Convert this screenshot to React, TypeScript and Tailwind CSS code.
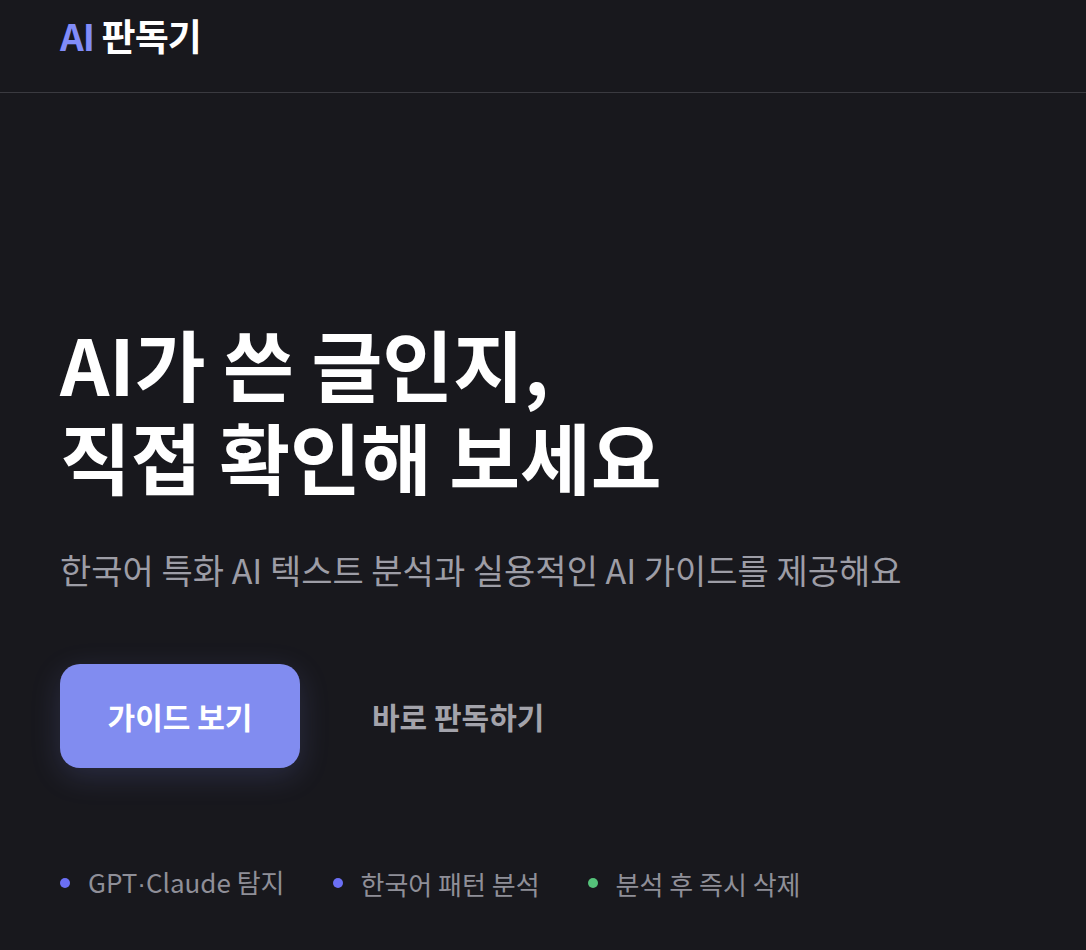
// 랜딩 히어로: 헤더 + 큰 제목 + CTA + 특징 뱃지

const font = { fontFamily: '"Noto Sans CJK KR", "Noto Sans", sans-serif' };

function Header() {
  return (
    <header className="h-[93px] border-b border-[#3a3a40]">
      <div className="h-full px-[60px] flex items-start pt-[11px]">
        <span className="text-[37px] font-bold tracking-tight leading-[48px]">
          <span className="text-[#818cf8]">AI</span>{" "}
          <span className="text-white">판독기</span>
        </span>
      </div>
    </header>
  );
}

const features = [
  { pre: "GPT", dot: true, rest: "Claude 탐지", color: "bg-[#6b6ff5]" },
  { pre: "한국어 패턴 분석", dot: false, rest: "", color: "bg-[#6b6ff5]" },
  { pre: "분석 후 즉시 삭제", dot: false, rest: "", color: "bg-[#55c27a]" },
];

export default function App() {
  return (
    <div className="min-h-[950px] bg-[#18181d]" style={font}>
      <Header />
      <main className="px-[60px] pt-[223px]">
        <h1 className="text-[77px] font-bold text-white leading-[93px]">
          AI가 쓴 글인지,
          <br />
          직접 확인해 보세요
        </h1>
        <p className="mt-[44px] text-[34px] text-[#9d9da6] leading-[48px]">
          한국어 특화 AI 텍스트 분석과 실용적인 AI 가이드를 제공해요
        </p>
        <div className="mt-[70px] flex items-center gap-[72px]">
          <button className="w-[240px] h-[104px] rounded-[20px] bg-[#818cf0] text-white text-[30px] font-bold shadow-[0_8px_30px_rgba(129,140,240,0.18)]">
            가이드 보기
          </button>
          <button className="text-[30px] font-bold text-[#a3a3ab]">
            바로 판독하기
          </button>
        </div>
        <ul className="mt-[94px] flex items-center gap-[48px]">
          {features.map((f) => (
            <li key={f.pre} className="flex items-center gap-[18px]">
              <span className={`w-[10px] h-[10px] rounded-full ${f.color}`} />
              <span className="text-[26px] text-[#8f8f98]">
                {f.pre}
                {f.dot && (
                  <span style={{ fontFamily: '"Liberation Sans", sans-serif' }}>·</span>
                )}
                {f.rest}
              </span>
            </li>
          ))}
        </ul>
      </main>
    </div>
  );
}
